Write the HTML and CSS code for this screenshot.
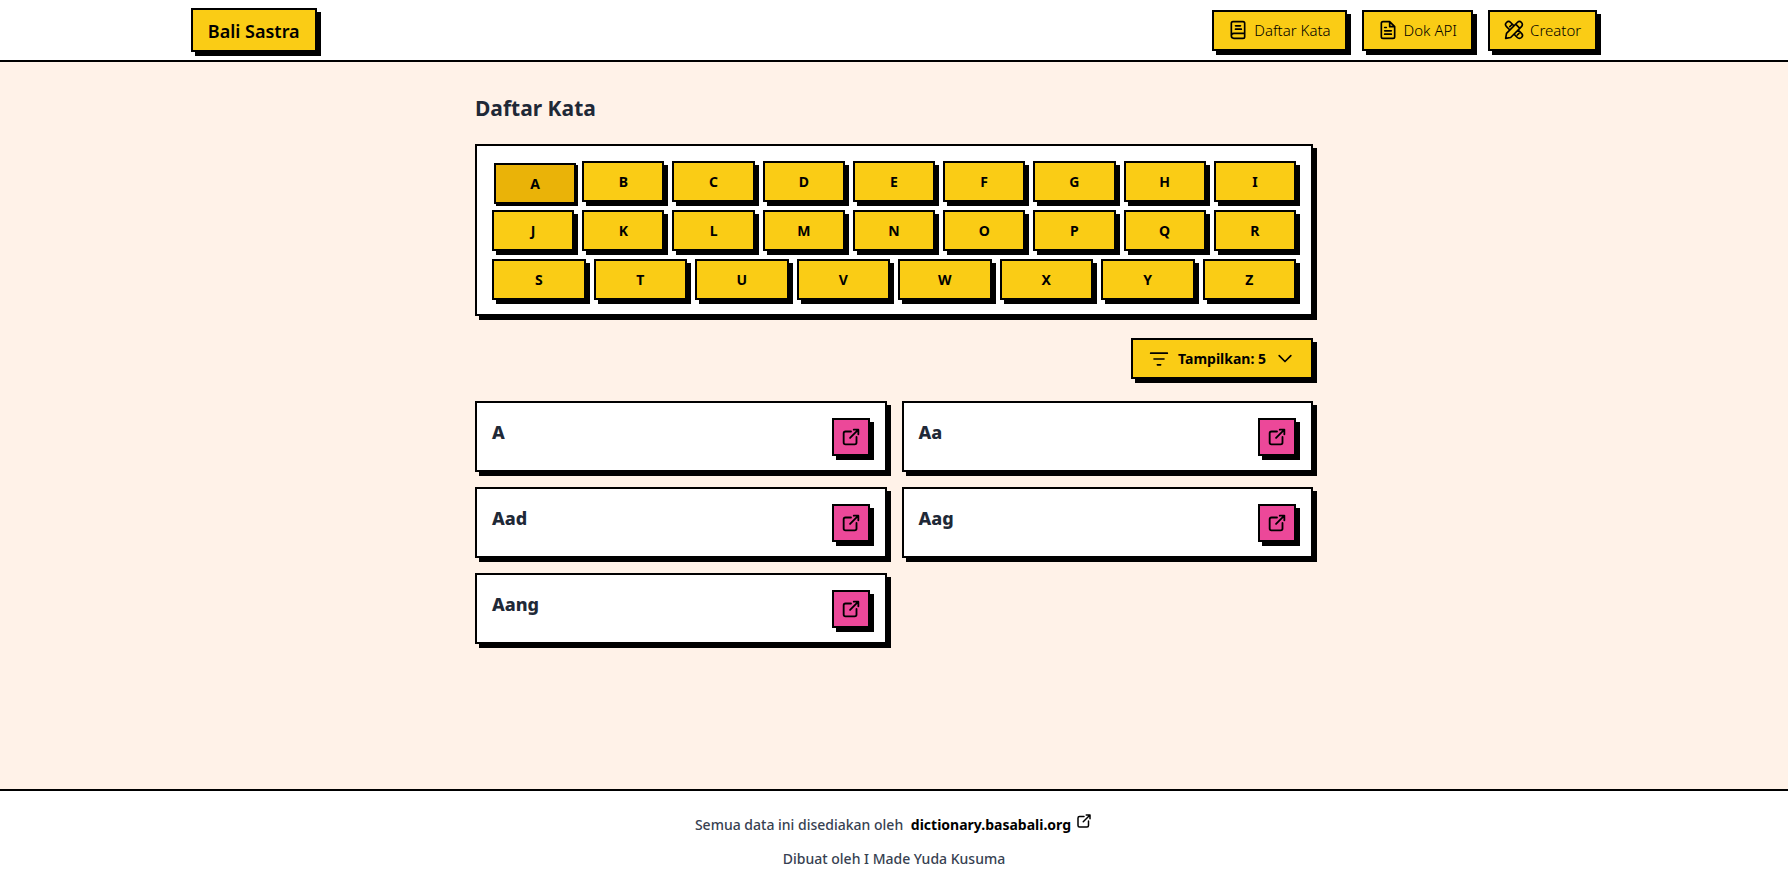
FILE: index.html
```html
<!DOCTYPE html>
<html lang="id">
<head>
<meta charset="utf-8">
<meta name="viewport" content="width=device-width, initial-scale=1">
<title>Bali Sastra - Daftar Kata</title>
<link rel="stylesheet" href="styles.css">
</head>
<body>
<svg class="sprite" aria-hidden="true">
  <symbol id="external" viewBox="0 0 24 24"><path d="M12 6H6a2 2 0 0 0-2 2v10a2 2 0 0 0 2 2h10a2 2 0 0 0 2-2v-6M11 13l9-9M15 4h5v5"/></symbol>
</svg>
<header class="site-header">
  <div class="header-inner">
    <a class="brand raised" href="#">Bali Sastra</a>
    <nav class="nav">
      <a class="nav-link raised" href="#"><svg class="icon" viewBox="0 0 24 24" aria-hidden="true"><path d="M4 19V4a2 2 0 0 1 2-2h12a2 2 0 0 1 2 2v16a2 2 0 0 1-2 2H7a3 3 0 0 1 0-6h13M9 7h6M9 11h7"/></svg>Daftar Kata</a>
      <a class="nav-link raised" href="#"><svg class="icon" viewBox="0 0 24 24" aria-hidden="true"><path d="M14 2H6a2 2 0 0 0-2 2v16a2 2 0 0 0 2 2h12a2 2 0 0 0 2-2V8zM14 2v6h6M8 9h2M8 13h8M8 17h8"/></svg>Dok API</a>
      <a class="nav-link raised" href="#"><svg class="icon" viewBox="0 0 24 24" aria-hidden="true"><path d="M2 22l1-6L16 3a3 3 0 0 1 5 5L8 21zM14 5l5 5M12 7L8 3a3 3 0 0 0-5 5l4 4M7 8l2-2M17 12l4 4a3 3 0 0 1-5 5l-4-4M16 18l2-2"/></svg>Creator</a>
    </nav>
  </div>
</header>
<main class="content">
  <h1 class="page-title">Daftar Kata</h1>
  <div class="panel raised">
    <button class="key raised active" type="button" aria-pressed="true">A</button>
    <button class="key raised" type="button">B</button>
    <button class="key raised" type="button">C</button>
    <button class="key raised" type="button">D</button>
    <button class="key raised" type="button">E</button>
    <button class="key raised" type="button">F</button>
    <button class="key raised" type="button">G</button>
    <button class="key raised" type="button">H</button>
    <button class="key raised" type="button">I</button>
    <button class="key raised" type="button">J</button>
    <button class="key raised" type="button">K</button>
    <button class="key raised" type="button">L</button>
    <button class="key raised" type="button">M</button>
    <button class="key raised" type="button">N</button>
    <button class="key raised" type="button">O</button>
    <button class="key raised" type="button">P</button>
    <button class="key raised" type="button">Q</button>
    <button class="key raised" type="button">R</button>
    <button class="key raised" type="button">S</button>
    <button class="key raised" type="button">T</button>
    <button class="key raised" type="button">U</button>
    <button class="key raised" type="button">V</button>
    <button class="key raised" type="button">W</button>
    <button class="key raised" type="button">X</button>
    <button class="key raised" type="button">Y</button>
    <button class="key raised" type="button">Z</button>
  </div>
  <button class="filter raised" type="button" aria-haspopup="listbox">
    <svg class="icon" viewBox="0 0 24 24" aria-hidden="true"><path d="M2 5h20M6 12h12M10 19h4"/></svg>
    Tampilkan: 5
    <svg class="icon" viewBox="0 0 24 24" aria-hidden="true"><path d="M5 8l7 7 7-7"/></svg>
  </button>
  <section class="words" aria-label="Kata">
    <article class="card raised"><h2 class="word">A</h2><a class="open raised" href="#" aria-label="Buka A"><svg class="icon open-icon"><use href="#external"/></svg></a></article>
    <article class="card raised"><h2 class="word">Aa</h2><a class="open raised" href="#" aria-label="Buka Aa"><svg class="icon open-icon"><use href="#external"/></svg></a></article>
    <article class="card raised"><h2 class="word">Aad</h2><a class="open raised" href="#" aria-label="Buka Aad"><svg class="icon open-icon"><use href="#external"/></svg></a></article>
    <article class="card raised"><h2 class="word">Aag</h2><a class="open raised" href="#" aria-label="Buka Aag"><svg class="icon open-icon"><use href="#external"/></svg></a></article>
    <article class="card raised"><h2 class="word">Aang</h2><a class="open raised" href="#" aria-label="Buka Aang"><svg class="icon open-icon"><use href="#external"/></svg></a></article>
  </section>
</main>
<footer class="site-footer">
  <p class="credit">Semua data ini disediakan oleh <a class="source" href="#">dictionary.basabali.org<svg class="icon source-icon"><use href="#external"/></svg></a></p>
  <p class="credit">Dibuat oleh I Made Yuda Kusuma</p>
</footer>
</body>
</html>
```
FILE: styles.css
```css
* { box-sizing: border-box; }

body {
  margin: 0;
  min-height: 100vh;
  display: flex;
  flex-direction: column;
  background: #fff2e8;
  color: #1f2937;
  font-family: "Noto Sans", "Open Sans", sans-serif;
  font-size: 14px;
  line-height: 21px;
}

a { color: #000; text-decoration: none; }
button { font: inherit; color: #000; cursor: pointer; }
h1, h2, p { margin: 0; }

.sprite { position: absolute; width: 0; height: 0; }

.icon {
  width: 20px;
  height: 20px;
  flex: none;
  fill: none;
  stroke: currentColor;
  stroke-width: 2;
  stroke-linecap: round;
  stroke-linejoin: round;
}

.raised { border: 2px solid #000; box-shadow: 4px 4px 0 #000; }

.site-header { background: #fff; border-bottom: 2px solid #000; }

.header-inner {
  width: 80%;
  margin: 0 auto;
  padding: 8px 12px;
  display: flex;
  align-items: center;
  justify-content: space-between;
}

.brand {
  padding: 9px 15px 7px;
  background: #facc15;
  font-size: 18px;
  line-height: 24px;
  font-weight: 600;
}

.nav { display: flex; gap: 15px; }

.nav-link {
  display: flex;
  align-items: center;
  gap: 6px;
  padding: 8px 14px;
  background: #facc15;
  font-size: 15px;
  font-weight: 300;
}

.content { flex: 1; width: 50%; margin: 0 auto; padding: 32px 28px; }

.page-title { font-size: 21px; line-height: 28px; font-weight: 700; margin-bottom: 22px; }

.panel {
  display: flex;
  flex-wrap: wrap;
  gap: 8px;
  padding: 15px 15px 14px;
  background: #fff;
}

.key {
  flex: 1 1 80px;
  padding: 8px;
  background: #facc15;
  font-weight: 700;
}

.key.active {
  background: #eab308;
  transform: translate(2px, 2px);
  box-shadow: 2px 2px 0 #000;
}

.filter {
  display: flex;
  align-items: center;
  gap: 9px;
  margin: 22px 0 22px auto;
  padding: 8px 16px;
  background: #facc15;
  font-weight: 700;
}

.words { display: grid; grid-template-columns: 1fr 1fr; gap: 15px; }

.card {
  display: flex;
  justify-content: space-between;
  align-items: flex-start;
  padding: 15px 15px 14px;
  background: #fff;
}

.word { font-size: 18px; line-height: 28px; font-weight: 800; }

.open { display: flex; padding: 6px; background: #ec4899; }
.open-icon { width: 22px; height: 22px; }

.site-footer {
  padding: 24px 16px 23px;
  border-top: 2px solid #000;
  background: #fff;
  color: #374151;
  text-align: center;
  line-height: 20px;
  font-weight: 500;
}

.credit + .credit { margin-top: 14px; }
.source { margin-left: 4px; font-weight: 700; }
.source-icon { width: 18px; height: 18px; margin: -4px 0 0 4px; }
```
